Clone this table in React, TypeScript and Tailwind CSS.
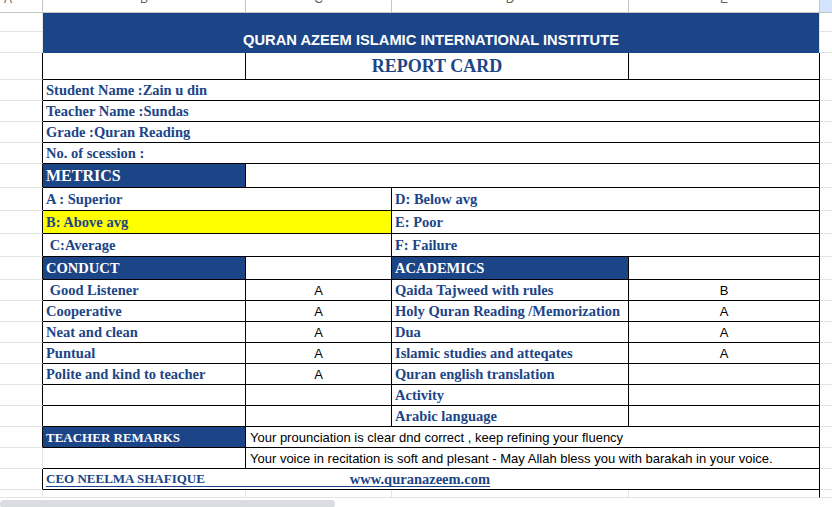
import React from "react";

const COLS = "grid grid-cols-[43px_203px_146px_237px_191px_1fr]";
const SERIF = "font-['Liberation_Serif',serif] font-bold text-[#1c4587]";
const SANS = "font-['Liberation_Sans',Arial,sans-serif]";
const G = "border-r border-b border-[#e2e3e3]";
const B = "border-r border-b border-black";
const AB = "border-r border-r-black border-b border-b-[#e2e3e3]";

function Label({ children, size = "text-[14.5px]" }: { children: React.ReactNode; size?: string }) {
  return <span className={`${SERIF} ${size} whitespace-pre leading-none`}>{children}</span>;
}

function Grade({ children }: { children?: React.ReactNode }) {
  return <span className={`${SANS} text-[13px] text-black leading-none`}>{children}</span>;
}

function LabelGradeRow({ left, c, d, e }: { left: string; c?: string; d: string; e?: string }) {
  return (
    <div className={`${COLS} h-[21px]`}>
      <div className={AB} />
      <div className={`${B} flex items-center pl-[3px]`}>
        <Label>{left}</Label>
      </div>
      <div className={`${B} flex items-center justify-center`}>
        <Grade>{c}</Grade>
      </div>
      <div className={`${B} flex items-center pl-[3px]`}>
        <Label>{d}</Label>
      </div>
      <div className={`${B} flex items-center justify-center`}>
        <Grade>{e}</Grade>
      </div>
      <div className="border-b border-[#e2e3e3]" />
    </div>
  );
}

export default function App() {
  const hdr = "border-r border-b border-[#c4c7c5] flex items-end justify-center pb-[7px] overflow-hidden";
  const hdrText = `${SANS} text-[12px] leading-none text-[#5f6368]`;
  return (
    <div className="w-[832px] h-[507px] overflow-hidden bg-white">
      {/* column headers */}
      <div className={`${COLS} h-[13px]`}>
        <div className={`${hdr} justify-start pl-[4px]`}>
          <span className={hdrText}>A</span>
        </div>
        <div className={hdr}>
          <span className={hdrText}>B</span>
        </div>
        <div className={hdr}>
          <span className={hdrText}>C</span>
        </div>
        <div className={hdr}>
          <span className={hdrText}>D</span>
        </div>
        <div className={hdr}>
          <span className={hdrText}>E</span>
        </div>
        <div className="border-b border-[#c4c7c5] bg-[#d3e3fd]" />
      </div>

      {/* title rows */}
      <div className={`${COLS} h-[40px]`}>
        <div className="flex flex-col">
          <div className={`${G} h-[19px]`} />
          <div className={`${G} h-[21px]`} />
        </div>
        <div className="col-span-4 bg-[#1c4587] border-r border-[#e2e3e3] flex items-end justify-center pb-[5px]">
          <span className={`${SANS} font-bold text-[14.7px] leading-none text-white`}>
            QURAN AZEEM ISLAMIC INTERNATIONAL INSTITUTE
          </span>
        </div>
        <div className="flex flex-col">
          <div className="border-b border-[#e2e3e3] h-[19px]" />
          <div className="border-b border-[#e2e3e3] h-[21px]" />
        </div>
      </div>

      {/* report card row */}
      <div className={`${COLS} h-[27px]`}>
        <div className={AB} />
        <div className={B} />
        <div className={`${B} col-span-2 flex items-center justify-center`}>
          <span className={`${SERIF} text-[18px] leading-none`}>REPORT CARD</span>
        </div>
        <div className={B} />
        <div className="border-b border-[#e2e3e3]" />
      </div>

      {["Student Name :Zain u din", "Teacher Name :Sundas", "Grade :Quran Reading", "No. of scession :"].map((t) => (
        <div key={t} className={`${COLS} h-[21px]`}>
          <div className={AB} />
          <div className={`${B} col-span-4 flex items-center pl-[3px]`}>
            <Label>{t}</Label>
          </div>
          <div className="border-b border-[#e2e3e3]" />
        </div>
      ))}

      {/* METRICS */}
      <div className={`${COLS} h-[24px]`}>
        <div className={AB} />
        <div className={`${B} bg-[#1c4587] flex items-center pl-[3px]`}>
          <span className="font-['Liberation_Serif',serif] font-bold text-[16px] leading-none text-white">METRICS</span>
        </div>
        <div className={`${B} col-span-3`} />
        <div className="border-b border-[#e2e3e3]" />
      </div>

      {[
        ["A : Superior", "D: Below avg", ""],
        ["B: Above avg", "E: Poor", "bg-[#ffff00]"],
        [" C:Average", "F: Failure", ""],
      ].map(([l, r, bg]) => (
        <div key={l} className={`${COLS} h-[23px]`}>
          <div className={AB} />
          <div className={`${B} ${bg} col-span-2 flex items-center pl-[3px]`}>
            <Label>{l}</Label>
          </div>
          <div className={`${B} col-span-2 flex items-center pl-[3px]`}>
            <Label>{r}</Label>
          </div>
          <div className="border-b border-[#e2e3e3]" />
        </div>
      ))}

      {/* CONDUCT / ACADEMICS */}
      <div className={`${COLS} h-[23px]`}>
        <div className={AB} />
        <div className={`${B} bg-[#1c4587] flex items-center pl-[3px]`}>
          <span className="font-['Liberation_Serif',serif] font-bold text-[14.5px] leading-none text-white">CONDUCT</span>
        </div>
        <div className={B} />
        <div className={`${B} bg-[#1c4587] flex items-center pl-[3px]`}>
          <span className="font-['Liberation_Serif',serif] font-bold text-[14.5px] leading-none text-white">ACADEMICS</span>
        </div>
        <div className={B} />
        <div className="border-b border-[#e2e3e3]" />
      </div>

      <LabelGradeRow left=" Good Listener" c="A" d="Qaida Tajweed with rules" e="B" />
      <LabelGradeRow left="Cooperative" c="A" d="Holy Quran Reading /Memorization" e="A" />
      <LabelGradeRow left="Neat and clean" c="A" d="Dua" e="A" />
      <LabelGradeRow left="Puntual" c="A" d="Islamic studies and atteqates" e="A" />
      <LabelGradeRow left="Polite and kind to teacher" c="A" d="Quran english translation" />
      <LabelGradeRow left="" d="Activity" />
      <LabelGradeRow left="" d="Arabic language" />

      {/* Teacher remarks */}
      <div className={`${COLS} h-[21px]`}>
        <div className={AB} />
        <div className={`${B} bg-[#1c4587] flex items-center pl-[3px]`}>
          <span className="font-['Liberation_Serif',serif] font-bold text-[13px] leading-none text-white">TEACHER REMARKS</span>
        </div>
        <div className={`${B} col-span-3 flex items-center pl-[4px]`}>
          <span className={`${SANS} text-[13px] leading-none text-black whitespace-pre`}>
            Your prounciation is clear dnd correct , keep refining your fluency
          </span>
        </div>
        <div className="border-b border-[#e2e3e3]" />
      </div>

      <div className={`${COLS} h-[21px]`}>
        <div className={G} />
        <div className="border-r border-b border-black" />
        <div className={`${B} col-span-3 flex items-center pl-[4px]`}>
          <span className={`${SANS} text-[13px] leading-none text-black whitespace-pre`}>
            Your voice in recitation is soft and plesant - May Allah bless you with barakah in your voice.
          </span>
        </div>
        <div className="border-b border-[#e2e3e3]" />
      </div>

      {/* footer */}
      <div className={`${COLS} h-[21px]`}>
        <div className={AB} />
        <div className={`${B} col-span-4 flex items-center pl-[3px]`}>
          <div className="w-[444px] flex justify-between items-end border-b border-[#1c4587] mt-[1px]">
            <span className={`${SERIF} text-[13px] leading-[14px]`}>CEO NEELMA SHAFIQUE</span>
            <span className={`${SERIF} text-[14.5px] leading-[14px]`}>www.quranazeem.com</span>
          </div>
        </div>
        <div className="border-b border-[#e2e3e3]" />
      </div>

      {/* partial row */}
      <div className={`${COLS} h-[8px]`}>
        <div className={G} />
        <div className={G} />
        <div className={G} />
        <div className={G} />
        <div className="border-r border-r-black border-b border-b-[#e2e3e3]" />
        <div className="border-b border-[#e2e3e3]" />
      </div>

      {/* scrollbar */}
      <div className="h-[10px] bg-white flex items-center pt-[1px]">
        <div className="w-[335px] h-[8px] rounded-full bg-[#dadce0]" />
      </div>
    </div>
  );
}
